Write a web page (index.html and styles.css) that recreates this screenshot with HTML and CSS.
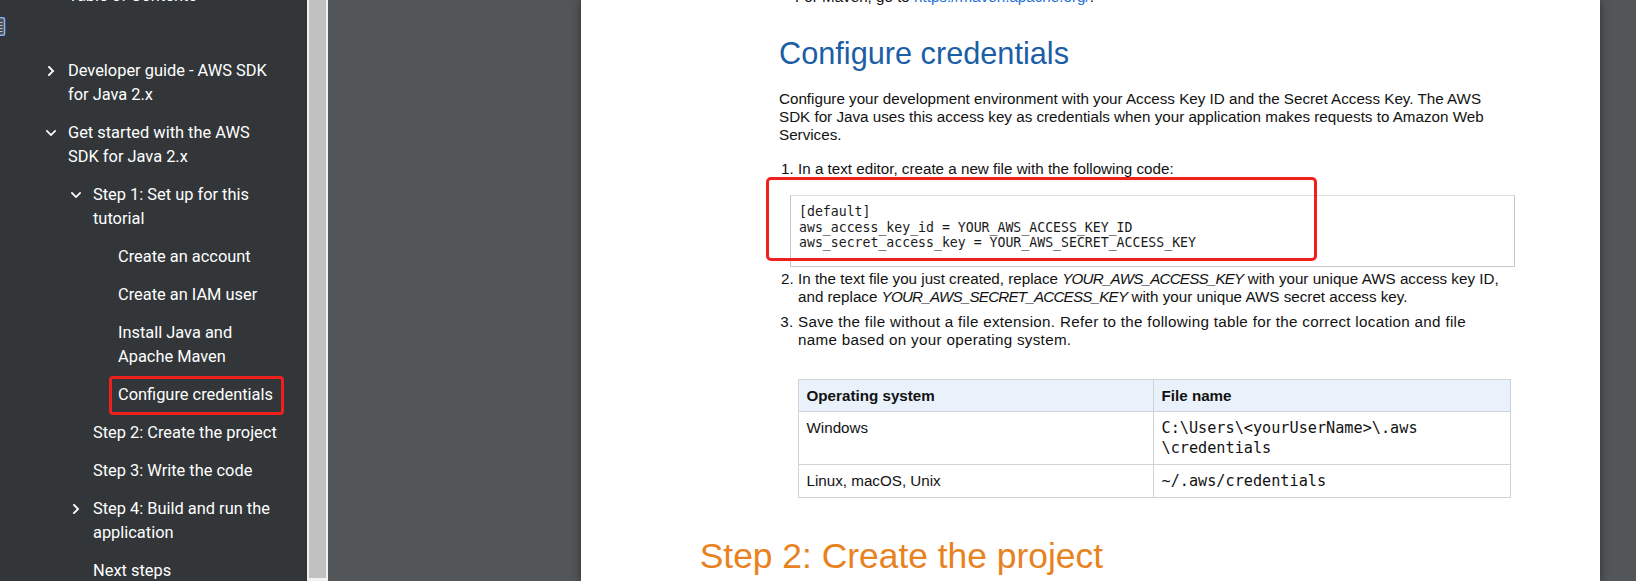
FILE: index.html
```html
<!DOCTYPE html>
<html lang="en">
<head>
<meta charset="utf-8">
<title>Configure credentials - AWS SDK for Java 2.x</title>
<link rel="stylesheet" href="styles.css">
</head>
<body>
<div class="app">
  <aside class="sidebar">
    <div class="sb-main">
      <div class="toc-title">Table of Contents</div>
      <div class="thumb-btn">
        <svg width="6" height="19" viewBox="0 0 6 19" aria-hidden="true">
          <rect x="-10" y="0.75" width="14.5" height="17.5" rx="1.5" fill="#4a4e52" stroke="#8ab4f8" stroke-width="1.5"/>
          <path d="M0 5.5h2.6M0 8.5h2.6M0 11.5h2.6M0 14.5h2.6" stroke="#b9bdc1" stroke-width="1"/>
        </svg>
      </div>
      <ul class="toc">
        <li class="item l1"><span class="chev"><svg width="10" height="10" viewBox="0 0 10 10"><path d="M3 0.9 L7.1 5 L3 9.1" /></svg></span><span class="label">Developer guide - AWS SDK for Java 2.x</span></li>
        <li class="item l1"><span class="chev"><svg width="10" height="10" viewBox="0 0 10 10"><path d="M0.9 3 L5 7.1 L9.1 3" /></svg></span><span class="label">Get started with the AWS SDK for Java 2.x</span></li>
        <li class="item l2"><span class="chev"><svg width="10" height="10" viewBox="0 0 10 10"><path d="M0.9 3 L5 7.1 L9.1 3" /></svg></span><span class="label">Step 1: Set up for this tutorial</span></li>
        <li class="item l3"><span class="chev"></span><span class="label">Create an account</span></li>
        <li class="item l3"><span class="chev"></span><span class="label">Create an IAM user</span></li>
        <li class="item l3"><span class="chev"></span><span class="label">Install Java and Apache Maven</span></li>
        <li class="item l3 marked"><span class="chev"></span><span class="label">Configure credentials</span></li>
        <li class="item l2"><span class="chev"></span><span class="label">Step 2: Create the project</span></li>
        <li class="item l2"><span class="chev"></span><span class="label">Step 3: Write the code</span></li>
        <li class="item l2"><span class="chev"><svg width="10" height="10" viewBox="0 0 10 10"><path d="M3 0.9 L7.1 5 L3 9.1" /></svg></span><span class="label">Step 4: Build and run the application</span></li>
        <li class="item l2"><span class="chev"></span><span class="label">Next steps</span></li>
      </ul>
    </div>
    <div class="scrollbar"><div class="thumb"></div></div>
  </aside>

  <main class="viewer">
    <article class="page">
      <ul class="bullets">
        <li>For Maven, go to <a href="#">https://maven.apache.org/</a>.</li>
      </ul>

      <h2 class="h2">Configure credentials</h2>

      <p class="para">Configure your development environment with your Access Key ID and the Secret Access Key. The AWS SDK for Java uses this access key as credentials when your application makes requests to Amazon Web Services.</p>

      <ol class="steps">
        <li class="step step-code">
          In a text editor, create a new file with the following code:
          <pre class="code">[default]
aws_access_key_id = YOUR_AWS_ACCESS_KEY_ID
aws_secret_access_key = YOUR_AWS_SECRET_ACCESS_KEY</pre>
          <div class="mark-box"></div>
        </li>
        <li class="step">In the text file you just created, replace <em>YOUR_AWS_ACCESS_KEY</em> with your unique AWS access key ID, and replace <em>YOUR_AWS_SECRET_ACCESS_KEY</em> with your unique AWS secret access key.</li>
        <li class="step step-wide">Save the file without a file extension. Refer to the following table for the correct location and file<br>name based on your operating system.
          <table class="os-table">
            <thead>
              <tr><th>Operating system</th><th>File name</th></tr>
            </thead>
            <tbody>
              <tr><td>Windows</td><td><code>C:\Users\&lt;yourUserName&gt;\.aws<wbr>\credentials</code></td></tr>
              <tr><td>Linux, macOS, Unix</td><td><code>~/.aws/credentials</code></td></tr>
            </tbody>
          </table>
        </li>
      </ol>

      <h1 class="h1">Step 2: Create the project</h1>
    </article>
  </main>
</div>
</body>
</html>
```

FILE: styles.css
```css
*,
*::before,
*::after {
  box-sizing: border-box;
  margin: 0;
  padding: 0;
}

html,
body {
  width: 1636px;
  height: 581px;
  overflow: hidden;
}

body {
  background: #525659;
  font-family: "Liberation Sans", Arial, sans-serif;
}

.app {
  display: flex;
  height: 581px;
}

/* ---------- Sidebar ---------- */
.sidebar {
  display: flex;
  flex: 0 0 328px;
  background: #323639;
}

.sb-main {
  flex: 0 0 307px;
  color: #ffffff;
  font-family: Roboto, "Liberation Sans", sans-serif;
  font-size: 16.4px;
  line-height: 24px;
  overflow: hidden;
}

.toc-title {
  margin-top: -16px;
  height: 24px;
  padding-left: 68px;
  white-space: nowrap;
}

.thumb-btn {
  margin-top: 9px;
  height: 19px;
  display: flex;
}

.toc {
  list-style: none;
  margin-top: 16px;
}

.item {
  position: relative;
  display: flex;
  align-items: flex-start;
  padding-top: 7px;
  padding-bottom: 7px;
  padding-right: 26px;
}

.item.l1 { padding-left: 43px; }
.item.l2 { padding-left: 68px; }
.item.l3 { padding-left: 93px; }

.chev {
  flex: 0 0 16px;
  margin-right: 9px;
  height: 24px;
  display: flex;
  align-items: center;
  justify-content: center;
}

.chev svg path {
  fill: none;
  stroke: #ffffff;
  stroke-width: 1.8;
  stroke-linecap: square;
  stroke-linejoin: miter;
}

.label {
  flex: 1 1 auto;
}

.item.marked::after {
  content: "";
  position: absolute;
  left: 109px;
  top: 0;
  width: 175px;
  height: 39px;
  border: 3px solid #f0201f;
  border-radius: 4px;
}

.scrollbar {
  flex: 0 0 21px;
  background: #f1f1f1;
  padding: 0 2px;
}

.thumb {
  height: 578px;
  background: #c1c1c1;
}

/* ---------- Viewer / page ---------- */
.viewer {
  flex: 1 1 auto;
  padding-left: 253px;
  overflow: hidden;
}

.page {
  width: 1019px;
  height: 581px;
  background: #ffffff;
  box-shadow: 0 0 9px rgba(0, 0, 0, 0.45);
  padding-left: 198px;
  padding-right: 88px;
  color: #121212;
  font-size: 15.2px;
  line-height: 18.24px;
  overflow: hidden;
}

.bullets {
  margin-top: -12.4px;
  padding-left: 16px;
}

.bullets a {
  color: #1f6fd6;
  text-decoration: none;
}

.h2 {
  margin-top: 29.9px;
  font-size: 30.7px;
  line-height: 36px;
  font-weight: normal;
  color: #1b5ea6;
}

.para {
  margin-top: 18.2px;
}

.steps {
  margin-top: 15px;
  padding-left: 19px;
}

.step {
  margin-top: 6.4px;
}

.step em {
  letter-spacing: -0.8px;
}

.step-wide {
  letter-spacing: 0.3px;
}

.step-code {
  position: relative;
  margin-top: 0;
}

.code {
  margin-top: 17.2px;
  margin-left: -8px;
  margin-right: -3px;
  padding: 8px 10px 15px 8px;
  border: 1px solid #c6c6c6;
  border-top: 1px solid #dedede;
  font-family: "DejaVu Sans Mono", monospace;
  font-size: 13.2px;
  line-height: 15.6px;
  color: #1a1a1a;
  white-space: pre;
}

.step-code + .step {
  margin-top: 3px;
}

.mark-box {
  position: absolute;
  left: -32px;
  top: 17px;
  width: 551px;
  height: 84px;
  border: 3px solid #f0201f;
  border-radius: 5px;
}

.os-table {
  margin-top: 29.7px;
  width: 713px;
  margin-left: -0.5px;
  border-collapse: collapse;
  table-layout: fixed;
  font-size: 15.2px;
  line-height: 19px;
  letter-spacing: normal;
}

.os-table th,
.os-table td {
  border: 1px solid #d0d4d8;
  padding: 6px 8px;
  text-align: left;
  vertical-align: top;
}

.os-table th {
  background: #e9f1fb;
  font-weight: bold;
}

.os-table th:first-child {
  width: 355px;
}

.os-table code {
  font-family: "DejaVu Sans Mono", monospace;
  font-size: 15.2px;
}

.h1 {
  margin-top: 37.2px;
  margin-left: -79.3px;
  font-size: 35.4px;
  line-height: 42px;
  font-weight: normal;
  color: #e8821e;
  white-space: nowrap;
}
```
